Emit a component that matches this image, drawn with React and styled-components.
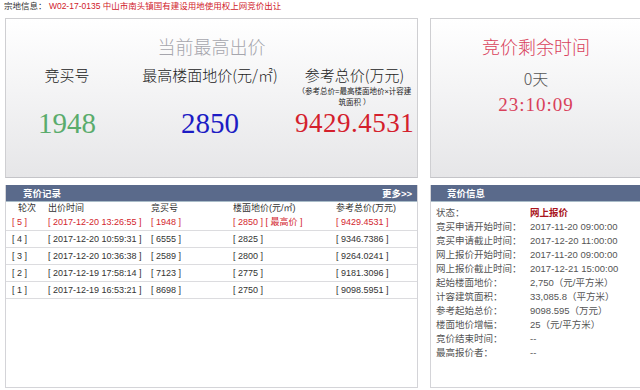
import React from "react";
import styled, { createGlobalStyle } from "styled-components";

const Global = createGlobalStyle`
  html, body { margin: 0; padding: 0; background: #fff; overflow: hidden; }
  body { font-family: "Liberation Sans", "Noto Sans CJK SC", sans-serif; color: #333; width: 640px; height: 390px; }
`;

const Page = styled.div`
  width: 640px;
  height: 390px;
  overflow: hidden;
`;

const TopLine = styled.div`
  height: 18px;
  padding-left: 4px;
  font-size: 8.5px;
  line-height: 12px;
  color: #333;
  white-space: nowrap;
`;

const Red = styled.span`
  color: #d0202a;
`;

const Grid = styled.div`
  display: grid;
  grid-template-columns: 413px 212px;
  grid-template-rows: 160px 203px;
  column-gap: 12px;
  row-gap: 7px;
  margin-left: 5px;
`;

const GradPanel = styled.div`
  box-sizing: border-box;
  border: 1px solid #cfcfd2;
  border-bottom-color: #c4c4c8;
  background: linear-gradient(to bottom, #ffffff 0%, #f4f4f5 45%, #e6e6e8 100%);
  padding-top: 15px;
  text-align: center;
  overflow: hidden;
`;

const BigTitle = styled.div`
  font-size: 18px;
  line-height: 24px;
  color: ${(p) => p.$color || "#a6a6ad"};
  font-family: "Noto Sans CJK SC", sans-serif;
  font-weight: 300;
`;

const Cols = styled.div`
  display: grid;
  grid-template-columns: 122px 164px 1fr;
  margin-top: 8px;
`;

const Col = styled.div`
  display: flex;
  flex-direction: column;
  align-items: center;
`;

const LabelBlock = styled.div`
  height: 42px;
`;

const Label = styled.div`
  font-size: 15px;
  line-height: 18px;
  color: #222;
  font-family: "Noto Sans CJK SC", sans-serif;
  font-weight: 300;
  white-space: nowrap;
`;

const Note = styled.div`
  font-size: 7.5px;
  line-height: 11px;
  color: #222;
  margin-top: 2px;
  white-space: nowrap;
`;

const BigNum = styled.div`
  font-family: "Liberation Serif", serif;
  font-size: ${(p) => p.$size || "29px"};
  line-height: 30px;
  color: ${(p) => p.$color};
  white-space: nowrap;
  letter-spacing: ${(p) => p.$ls || "0"};
`;

const SubText = styled.div`
  font-size: ${(p) => p.$size || "16px"};
  line-height: ${(p) => p.$lh || "24px"};
  color: ${(p) => p.$color};
  font-family: ${(p) => (p.$serif ? '"Liberation Serif", serif' : '"Noto Sans CJK SC", sans-serif')};
  font-weight: 300;
  letter-spacing: ${(p) => p.$ls || "0"};
  margin-top: ${(p) => p.$mt || "0"};
`;

const Panel = styled.div`
  box-sizing: border-box;
  border: 1px solid #d4d4d8;
  border-top: none;
  background: #fff;
  overflow: hidden;
`;

const Bar = styled.div`
  height: 16px;
  background: #5a6a8b;
  border-bottom: 1px solid #a9bcc8;
  display: flex;
  align-items: center;
  justify-content: space-between;
  padding: 0 5px 0 ${(p) => p.$pl || "17px"};
  color: #fff;
  font-weight: bold;
  font-size: 9.5px;
`;

const Table = styled.div`
  display: grid;
  grid-template-columns: 42px 103px 82px 103px 1fr;
  font-size: 9px;
`;

const Cell = styled.div`
  height: ${(p) => (p.$head ? "12px" : "16px")};
  line-height: ${(p) => (p.$head ? "12px" : "16px")};
  padding-left: ${(p) => p.$pl || "0"};
  color: ${(p) => (p.$red ? "#d3262e" : "#333")};
  border-bottom: ${(p) => (p.$head ? "none" : "1px solid #dcdcdf")};
  white-space: nowrap;
`;

const Info = styled.div`
  padding: 4px 0 0 5px;
  display: grid;
  grid-template-columns: 94px 1fr;
  font-size: 9.5px;
  line-height: 14px;
  color: #555;
`;

const InfoVal = styled.div`
  color: ${(p) => (p.$strong ? "#a8141c" : "#555")};
  font-weight: ${(p) => (p.$strong ? "bold" : "normal")};
  white-space: nowrap;
`;

const InfoLabel = styled.div`
  white-space: nowrap;
`;

const rows = [
  { r: "5", t: "2017-12-20 13:26:55", n: "1948", p: "2850", s: "9429.4531", red: true },
  { r: "4", t: "2017-12-20 10:59:31", n: "6555", p: "2825", s: "9346.7386" },
  { r: "3", t: "2017-12-20 10:36:38", n: "2589", p: "2800", s: "9264.0241" },
  { r: "2", t: "2017-12-19 17:58:14", n: "7123", p: "2775", s: "9181.3096" },
  { r: "1", t: "2017-12-19 16:53:21", n: "8698", p: "2750", s: "9098.5951" },
];

const info = [
  ["状态：", "网上报价", true],
  ["竞买申请开始时间：", "2017-11-20 09:00:00"],
  ["竞买申请截止时间：", "2017-12-20 11:00:00"],
  ["网上报价开始时间：", "2017-11-20 09:00:00"],
  ["网上报价截止时间：", "2017-12-21 15:00:00"],
  ["起始楼面地价：", "2,750（元/平方米）"],
  ["计容建筑面积：", "33,085.8（平方米）"],
  ["参考起始总价：", "9098.595（万元）"],
  ["楼面地价增幅：", "25（元/平方米）"],
  ["竞价结束时间：", "--"],
  ["最高报价者：", "--"],
];

export default function App() {
  return (
    <Page>
      <Global />
      <TopLine>
        宗地信息： <Red>W02-17-0135 中山市南头镇国有建设用地使用权上网竞价出让</Red>
      </TopLine>
      <Grid>
        <GradPanel>
          <BigTitle>当前最高出价</BigTitle>
          <Cols>
            <Col>
              <LabelBlock>
                <Label>竞买号</Label>
              </LabelBlock>
              <BigNum $color="#5aac6c">1948</BigNum>
            </Col>
            <Col>
              <LabelBlock>
                <Label>最高楼面地价(元/㎡)</Label>
              </LabelBlock>
              <BigNum $color="#1c1cc4">2850</BigNum>
            </Col>
            <Col>
              <LabelBlock>
                <Label>参考总价(万元)</Label>
                <Note>
                  （参考总价=最高楼面地价×计容建
                  <br />
                  筑面积 ）
                </Note>
              </LabelBlock>
              <BigNum $color="#d4202c" $size="27px" $ls="0.5px">9429.4531</BigNum>
            </Col>
          </Cols>
        </GradPanel>
        <GradPanel>
          <BigTitle $color="#d9405a">竞价剩余时间</BigTitle>
          <SubText $color="#555" $mt="8px">0天</SubText>
          <SubText $color="#d9405a" $serif $size="19px" $lh="22px" $ls="1px" $mt="4px">
            23:10:09
          </SubText>
        </GradPanel>
        <Panel>
          <Bar>
            <span>竞价记录</span>
            <span>更多&gt;&gt;</span>
          </Bar>
          <Table>
            <Cell $head $pl="12px">轮次</Cell>
            <Cell $head>出价时间</Cell>
            <Cell $head>竞买号</Cell>
            <Cell $head>楼面地价(元/㎡)</Cell>
            <Cell $head>参考总价(万元)</Cell>
            {rows.map((row) => (
              <React.Fragment key={row.r}>
                <Cell $red={row.red} $pl="6px">[ {row.r} ]</Cell>
                <Cell $red={row.red}>[ {row.t} ]</Cell>
                <Cell $red={row.red}>[ {row.n} ]</Cell>
                <Cell $red={row.red}>
                  [ {row.p} ]{row.red ? " [ 最高价 ]" : ""}
                </Cell>
                <Cell $red={row.red}>[ {row.s} ]</Cell>
              </React.Fragment>
            ))}
          </Table>
        </Panel>
        <Panel>
          <Bar $pl="16px">
            <span>竞价信息</span>
          </Bar>
          <Info>
            {info.map(([l, v, s]) => (
              <React.Fragment key={l}>
                <InfoLabel>{l}</InfoLabel>
                <InfoVal $strong={s}>{v}</InfoVal>
              </React.Fragment>
            ))}
          </Info>
        </Panel>
      </Grid>
    </Page>
  );
}
